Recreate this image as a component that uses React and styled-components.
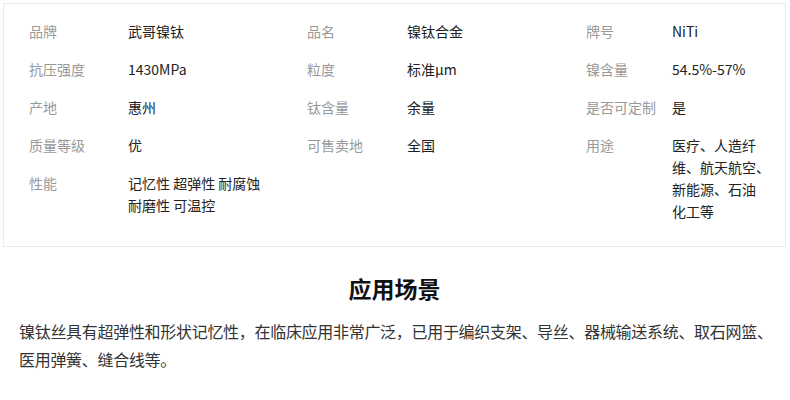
import styled, { createGlobalStyle } from "styled-components";

const GlobalStyle = createGlobalStyle`
  body {
    margin: 0;
    background: #fff;
    font-family: "Noto Sans CJK SC", "Noto Sans", sans-serif;
  }
`;

const Page = styled.div`
  width: 790px;
  padding: 3px 4px 0 3px;
  box-sizing: border-box;
`;

const SpecBox = styled.div`
  border: 1px solid #ebebeb;
  padding: 8px 0 16px 25px;
  display: grid;
  grid-template-columns: 278px 279px 1fr;
  align-items: start;
`;

const Column = styled.div`
  display: flex;
  flex-direction: column;
`;

const Item = styled.div`
  display: flex;
  padding: 8px 0;
  font-size: 14px;
  line-height: 22px;
`;

const Label = styled.span`
  flex: none;
  width: ${(p) => p.$w}px;
  color: #999;
`;

const Value = styled.span`
  color: #222;
  width: ${(p) => p.$w}px;
  white-space: pre-line;
`;

const Title = styled.h2`
  margin: 26px 0 0;
  text-align: center;
  font-size: 23px;
  line-height: 30px;
  font-weight: 700;
  color: #111;
`;

const Paragraph = styled.p`
  margin: 14px 0 0;
  padding: 0 6px 0 16px;
  font-size: 16px;
  letter-spacing: -0.3px;
  line-height: 28px;
  color: #333;
`;

const columns = [
  {
    labelWidth: 99,
    valueWidth: 160,
    items: [
      ["品牌", "武哥镍钛"],
      ["抗压强度", "1430MPa"],
      ["产地", "惠州"],
      ["质量等级", "优"],
      ["性能", "记忆性 超弹性 耐腐蚀\n耐磨性 可温控"],
    ],
  },
  {
    labelWidth: 100,
    valueWidth: 160,
    items: [
      ["品名", "镍钛合金"],
      ["粒度", "标准μm"],
      ["钛含量", "余量"],
      ["可售卖地", "全国"],
    ],
  },
  {
    labelWidth: 86,
    valueWidth: 110,
    items: [
      ["牌号", "NiTi"],
      ["镍含量", "54.5%-57%"],
      ["是否可定制", "是"],
      ["用途", "医疗、人造纤\n维、航天航空、\n新能源、石油\n化工等"],
    ],
  },
];

const App = () => {
  return (
    <Page>
      <GlobalStyle />
      <SpecBox>
        {columns.map((col, i) => (
          <Column key={i}>
            {col.items.map(([label, value]) => (
              <Item key={label}>
                <Label $w={col.labelWidth}>{label}</Label>
                <Value $w={col.valueWidth}>{value}</Value>
              </Item>
            ))}
          </Column>
        ))}
      </SpecBox>
      <Title>应用场景</Title>
      <Paragraph>
        镍钛丝具有超弹性和形状记忆性，在临床应用非常广泛，已用于编织支架、导丝、器械输送系统、取石网篮、医用弹簧、缝合线等。
      </Paragraph>
    </Page>
  );
};

export default App;
